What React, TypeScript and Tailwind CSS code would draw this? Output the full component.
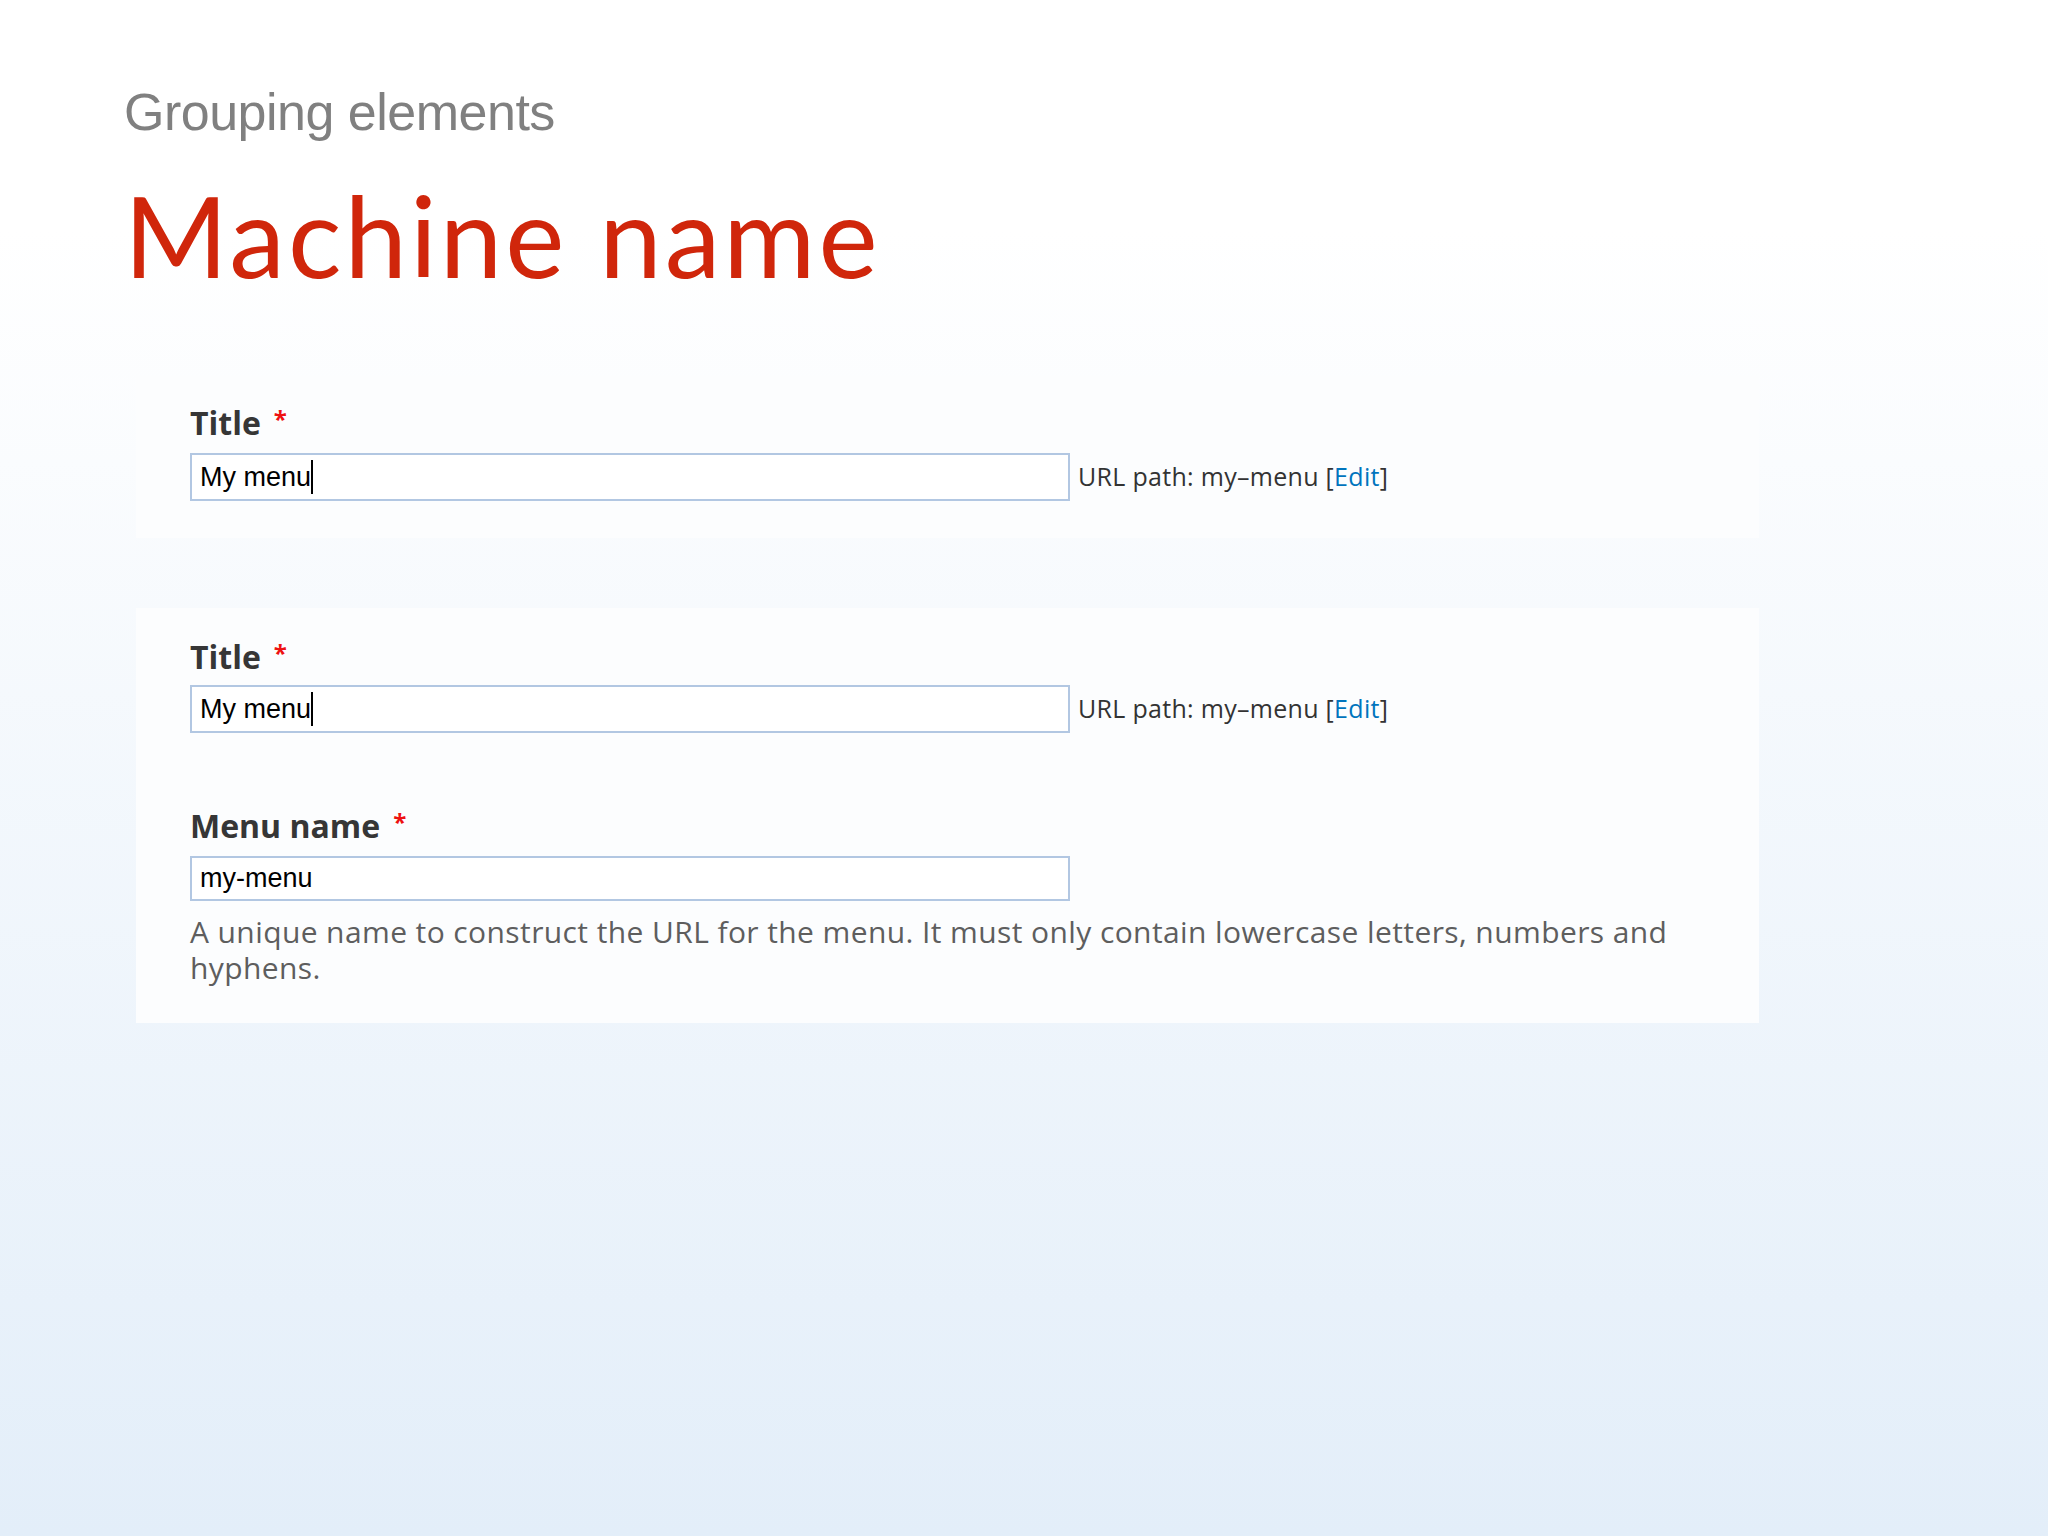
import React from 'react';

const label = "font-['Open_Sans',sans-serif] font-bold text-[32px] leading-none text-[#363636]";
const star = "text-[#ee1111] text-[24px] align-top ml-[13px]";
const field = "box-border w-[880px] border-2 border-[#b2c7e2] bg-white flex items-center pl-[8px] font-['Liberation_Sans',Arial,sans-serif] text-[27px] text-black";

function Caret() {
  return <span className="inline-block w-[2px] h-[34px] bg-black" />;
}

function UrlPath() {
  return (
    <span className="ml-[8px] font-['Open_Sans',sans-serif] text-[25px] tracking-[0.3px] text-[#333]">
      URL path: my–menu [<span className="text-[#0074bd]">Edit</span>]
    </span>
  );
}

function TitleRow({ top }: { top: string }) {
  return (
    <>
      <div className={label}>
        Title<span className={star}>*</span>
      </div>
      <div className={`flex items-center ${top}`}>
        <div className={`${field} h-[48px]`}>
          My menu
          <Caret />
        </div>
        <UrlPath />
      </div>
    </>
  );
}

export default function App() {
  return (
    <div className="w-[2048px] h-[1536px] bg-linear-to-b from-white from-15% to-[#e3eef9] overflow-hidden">
      <div className="pl-[124px] pt-[86px]">
        <h2 className="font-['Liberation_Sans',Arial,sans-serif] text-[52px] leading-none tracking-[-0.5px] text-[#808080]">
          Grouping elements
        </h2>
        <h1 className="mt-[41px] font-['Lato',sans-serif] text-[112px] leading-none text-[#d0260b] tracking-[3px]">
          Machine name
        </h1>
      </div>

      <div className="ml-[136px] w-[1623px] mt-[85px] bg-[#fcfdfe] px-[54px] pt-[31px] pb-[37px]">
        <TitleRow top="mt-[14px]" />
      </div>

      <div className="ml-[136px] w-[1623px] mt-[70px] bg-[#fcfdfe] px-[54px] pt-[33px] pb-[37px]">
        <TitleRow top="mt-[12px]" />

        <div className={`${label} mt-[77px]`}>
          Menu name<span className={star}>*</span>
        </div>
        <div className={`${field} h-[45px] mt-[14px]`}>my-menu</div>
        <p className="mt-[13px] font-['Open_Sans',sans-serif] text-[30px] leading-[36px] tracking-[0.4px] text-[#5e5e5e] whitespace-nowrap">
          A unique name to construct the URL for the menu. It must only contain lowercase letters, numbers and
          <br />
          hyphens.
        </p>
      </div>
    </div>
  );
}
